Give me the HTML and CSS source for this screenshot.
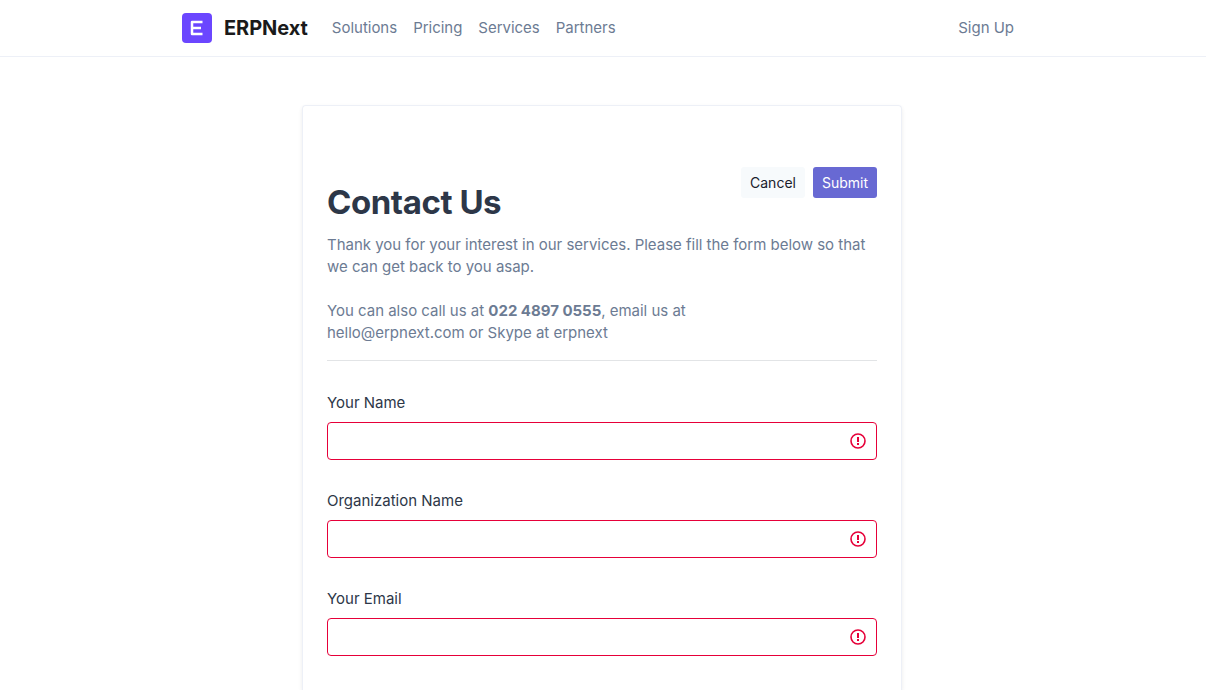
FILE: index.html
```html
<!DOCTYPE html>
<html lang="en">
<head>
<meta charset="utf-8">
<title>Contact Us</title>
<link rel="stylesheet" href="styles.css">
</head>
<body>
<nav class="navbar">
  <div class="navbar-inner">
    <a class="brand">
      <svg class="logo" viewBox="0 0 30 30"><rect width="30" height="30" rx="4" fill="#6b46ff"/><path d="M20.500 9H10v12h10.500M10 15h9" fill="none" stroke="#fff" stroke-width="2.500" stroke-linejoin="round"/></svg>
      <span>ERPNext</span>
    </a>
    <div class="links"><a>Solutions</a><a>Pricing</a><a>Services</a><a>Partners</a></div>
    <a class="signup">Sign Up</a>
  </div>
</nav>
<main class="card">
  <div class="actions"><button class="btn">Cancel</button><button class="btn primary">Submit</button></div>
  <h1>Contact Us</h1>
  <div class="intro">
    <p>Thank you for your interest in our services. Please fill the form below so that<br>we can get back to you asap.</p>
    <p>You can also call us at <strong>022 4897 0555</strong>, email us at<br>hello@erpnext.com or Skype at erpnext</p>
  </div>
  <form class="form">
    <div class="field"><label>Your Name</label><div class="control"><svg class="alert" viewBox="0 0 16 16"><circle cx="8" cy="8" r="7"/><path d="M8 3.900v5.100M8 10.100v2"/></svg></div></div>
    <div class="field"><label>Organization Name</label><div class="control"><svg class="alert" viewBox="0 0 16 16"><circle cx="8" cy="8" r="7"/><path d="M8 3.900v5.100M8 10.100v2"/></svg></div></div>
    <div class="field"><label>Your Email</label><div class="control"><svg class="alert" viewBox="0 0 16 16"><circle cx="8" cy="8" r="7"/><path d="M8 3.900v5.100M8 10.100v2"/></svg></div></div>
  </form>
</main>
</body>
</html>
```
FILE: styles.css
```css
* { box-sizing: border-box; }
body { display: flex; flex-direction: column; margin: 0; background: #fff; color: #2d3748; font: 15px/22px Inter, sans-serif; height: 690px; }
.navbar { flex: none; height: 57px; border-bottom: 1px solid #edf0f7; }
.navbar-inner { display: flex; align-items: center; width: 842px; height: 56px; margin-left: 182px; color: #6c7b93; letter-spacing: -0.02px; }
.brand { display: flex; align-items: center; gap: 12px; color: #1a1a1a; font-size: 20px; font-weight: 700; letter-spacing: -0.05px; }
.logo { width: 30px; height: 30px; }
.links { display: flex; gap: 16px; margin-left: 24px; }
.signup { margin-left: auto; margin-right: 10px; }
.card { flex: 1; width: 600px; margin: 48px 0 0 302px; padding: 61px 24px 0; border: 1px solid #edf0f7; border-bottom: 0; border-radius: 4px 4px 0 0; box-shadow: 0 2px 4px rgba(0,0,0,.08); }
.actions { display: flex; justify-content: flex-end; gap: 8px; height: 31px; }
.btn { width: 64px; height: 31px; padding: 0; border: 0; border-radius: 3px; background: #f7fafc; color: #1a202c; font: 14px/21px Inter, sans-serif; }
.primary { background: #6869d3; color: #fff; }
h1 { margin: -16px 0 0; font-size: 33px; line-height: 40px; font-weight: 700; letter-spacing: -0.44px; }
.intro { height: 127px; margin-top: 12px; border-bottom: 1px solid #e2e4e6; color: #6c7b93; letter-spacing: -0.015px; }
.intro p { margin: 0 0 22px; }
.form { padding-top: 31px; color: #2d3748; }
.field { height: 98px; }
.field label { display: block; height: 30px; }
.control { display: flex; align-items: center; justify-content: flex-end; height: 38px; padding-right: 10px; border: 1px solid #e60039; border-radius: 4px; }
.alert { width: 16px; height: 16px; fill: none; stroke: #e60039; stroke-width: 1.6; }
.alert path { stroke-width: 2; }
```
